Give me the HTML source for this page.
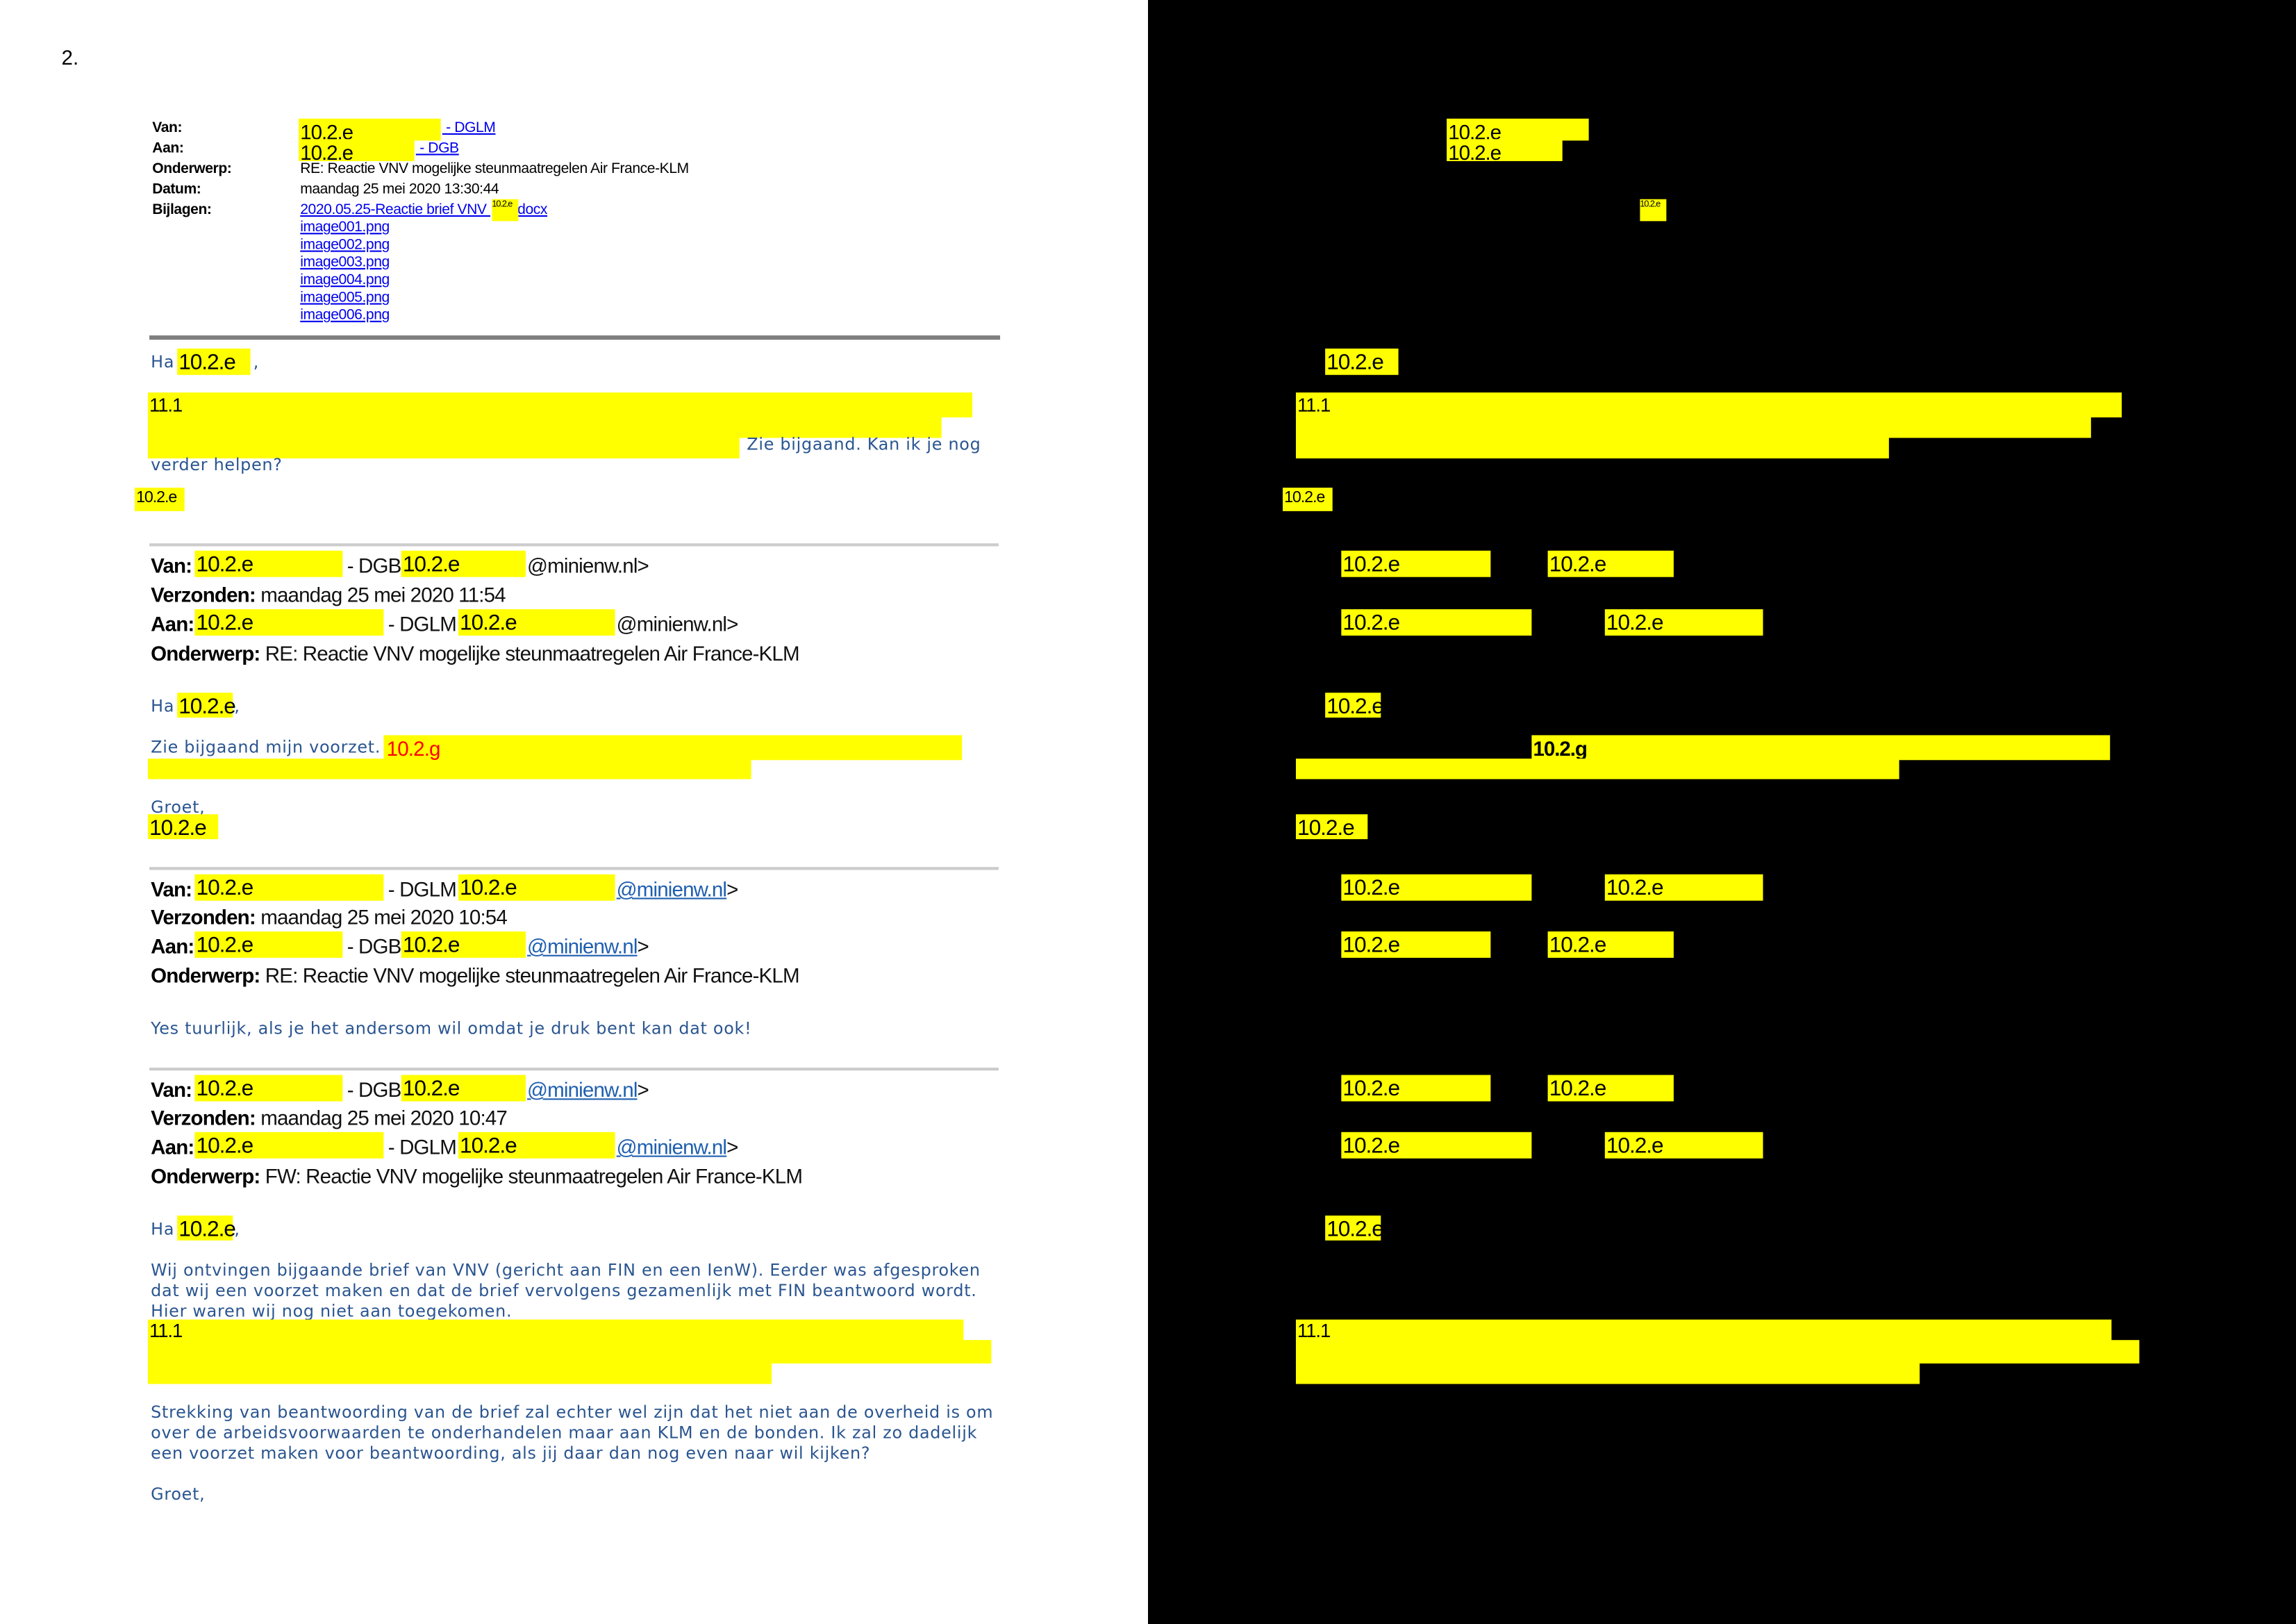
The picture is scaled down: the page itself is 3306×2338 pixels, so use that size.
<!DOCTYPE html>
<html><head><meta charset="utf-8"><style>
html,body{margin:0;padding:0;background:#fff;width:3306px;height:2337px;overflow:hidden}
#p{position:absolute;left:0;top:0;width:1568px;height:1109px;transform:scale(2.10842);transform-origin:0 0}
.a{position:absolute;white-space:nowrap;line-height:1}
.y{position:absolute;background:#ffff00}
.y span{position:absolute;left:1px;top:1px;font:15px "Liberation Sans",sans-serif;color:#000;letter-spacing:-0.5px}
.h{font:10px "Liberation Sans",sans-serif;color:#000;letter-spacing:-0.2px}
.hb{font-weight:bold}
.lk{color:#0000ee;text-decoration:underline}
.c{font:14px "Liberation Sans",sans-serif;color:#111;letter-spacing:-0.4px}
.c b{color:#000}
.v{font:11.3px "DejaVu Sans",sans-serif;color:#2a5590;letter-spacing:0.35px}
.ln{position:absolute;background:#ccc;height:1.5px}
.ul{color:#1f5fb0;text-decoration:underline}
</style></head><body><div id="p">
<div style="position:absolute;left:784px;top:0;width:784px;height:1109px;background:#000"></div>
<div class="a" style="left:42px;top:31px;font:14px 'Liberation Sans',sans-serif">2.</div>

<div class="a h hb" style="left:104px;top:82px">Van:</div>
<div class="a h hb" style="left:104px;top:96px">Aan:</div>
<div class="a h hb" style="left:104px;top:110px">Onderwerp:</div>
<div class="a h hb" style="left:104px;top:124px">Datum:</div>
<div class="a h hb" style="left:104px;top:138px">Bijlagen:</div>
<div class="y" style="left:204px;top:81px;width:97px;height:15px"><span style="font-size:14px">10.2.e</span></div>
<div class="y" style="left:204px;top:95px;width:79px;height:15px"><span style="font-size:14px">10.2.e</span></div>
<div class="a h lk" style="left:302px;top:82px">&nbsp;- DGLM</div>
<div class="a h lk" style="left:284px;top:96px">&nbsp;- DGB</div>
<div class="a h" style="left:205px;top:110px">RE: Reactie VNV mogelijke steunmaatregelen Air France-KLM</div>
<div class="a h" style="left:205px;top:124px">maandag 25 mei 2020 13:30:44</div>
<div class="a h lk" style="left:205px;top:138px">2020.05.25-Reactie brief VNV <span style="display:inline-block;width:16px"></span>.docx</div>
<div class="y" style="left:336px;top:136px;width:18px;height:15px"><span style="font-size:6px;left:0">10.2.e</span></div>
<div class="a h lk" style="left:205px;top:150px">image001.png</div>
<div class="a h lk" style="left:205px;top:162px">image002.png</div>
<div class="a h lk" style="left:205px;top:174px">image003.png</div>
<div class="a h lk" style="left:205px;top:186px">image004.png</div>
<div class="a h lk" style="left:205px;top:198px">image005.png</div>
<div class="a h lk" style="left:205px;top:210px">image006.png</div>
<div style="position:absolute;left:102px;top:229px;width:581px;height:2.5px;background:#808080"></div>

<div class="a v" style="left:103px;top:241px">Ha</div>
<div class="y" style="left:121px;top:238px;width:50px;height:18px"><span>10.2.e</span></div>
<div class="a v" style="left:173px;top:241px">,</div>
<div class="y" style="left:101px;top:268px;width:563px;height:17px"><span style="font-size:13px">11.1</span></div>
<div class="y" style="left:101px;top:284px;width:542px;height:15px"></div>
<div class="y" style="left:101px;top:298px;width:404px;height:15px"></div>
<div class="a v" style="left:510px;top:297px">Zie bijgaand. Kan ik je nog</div>
<div class="a v" style="left:103px;top:311px">verder helpen?</div>
<div class="y" style="left:92px;top:333px;width:34px;height:16px"><span style="font-size:11px">10.2.e</span></div>

<div class="ln" style="left:102px;top:371px;width:580px"></div>
<div class="a c" style="left:103px;top:378px"><b>Van:</b></div>
<div class="y" style="left:133px;top:376px;width:101px;height:18px"><span>10.2.e</span></div>
<div class="a c" style="left:237px;top:378px">- DGB</div>
<div class="y" style="left:274px;top:376px;width:85px;height:18px"><span>10.2.e</span></div>
<div class="a c" style="left:360px;top:378px">@minienw.nl&gt;</div>
<div class="a c" style="left:103px;top:398px"><b>Verzonden:</b> maandag 25 mei 2020 11:54</div>
<div class="a c" style="left:103px;top:418px"><b>Aan:</b></div>
<div class="y" style="left:133px;top:416px;width:129px;height:18px"><span>10.2.e</span></div>
<div class="a c" style="left:265px;top:418px">- DGLM</div>
<div class="y" style="left:313px;top:416px;width:107px;height:18px"><span>10.2.e</span></div>
<div class="a c" style="left:421px;top:418px">@minienw.nl&gt;</div>
<div class="a c" style="left:103px;top:438px"><b>Onderwerp:</b> RE: Reactie VNV mogelijke steunmaatregelen Air France-KLM</div>

<div class="a v" style="left:103px;top:476px">Ha</div>
<div class="y" style="left:121px;top:473px;width:38px;height:17px"><span>10.2.e</span></div>
<div class="a v" style="left:160px;top:476px">,</div>
<div class="y" style="left:262px;top:502px;width:395px;height:17px"></div>
<div class="y" style="left:101px;top:518px;width:412px;height:14px"></div>
<div class="a v" style="left:103px;top:504px">Zie bijgaand mijn voorzet.</div>
<div class="a" style="left:264px;top:503px;font:14px 'Liberation Sans',sans-serif;color:#f00;letter-spacing:-0.4px">10.2.g</div>
<div class="a v" style="left:103px;top:545px">Groet,</div>
<div class="y" style="left:101px;top:556px;width:48px;height:17px"><span>10.2.e</span></div>

<div class="ln" style="left:102px;top:592px;width:580px"></div>
<div class="a c" style="left:103px;top:599px"><b>Van:</b></div>
<div class="y" style="left:133px;top:597px;width:129px;height:18px"><span>10.2.e</span></div>
<div class="a c" style="left:265px;top:599px">- DGLM</div>
<div class="y" style="left:313px;top:597px;width:107px;height:18px"><span>10.2.e</span></div>
<div class="a c" style="left:421px;top:599px"><span class="ul">@minienw.nl</span>&gt;</div>
<div class="a c" style="left:103px;top:618px"><b>Verzonden:</b> maandag 25 mei 2020 10:54</div>
<div class="a c" style="left:103px;top:638px"><b>Aan:</b></div>
<div class="y" style="left:133px;top:636px;width:101px;height:18px"><span>10.2.e</span></div>
<div class="a c" style="left:237px;top:638px">- DGB</div>
<div class="y" style="left:274px;top:636px;width:85px;height:18px"><span>10.2.e</span></div>
<div class="a c" style="left:360px;top:638px"><span class="ul">@minienw.nl</span>&gt;</div>
<div class="a c" style="left:103px;top:658px"><b>Onderwerp:</b> RE: Reactie VNV mogelijke steunmaatregelen Air France-KLM</div>
<div class="a v" style="left:103px;top:696px">Yes tuurlijk, als je het andersom wil omdat je druk bent kan dat ook!</div>

<div class="ln" style="left:102px;top:729px;width:580px"></div>
<div class="a c" style="left:103px;top:736px"><b>Van:</b></div>
<div class="y" style="left:133px;top:734px;width:101px;height:18px"><span>10.2.e</span></div>
<div class="a c" style="left:237px;top:736px">- DGB</div>
<div class="y" style="left:274px;top:734px;width:85px;height:18px"><span>10.2.e</span></div>
<div class="a c" style="left:360px;top:736px"><span class="ul">@minienw.nl</span>&gt;</div>
<div class="a c" style="left:103px;top:755px"><b>Verzonden:</b> maandag 25 mei 2020 10:47</div>
<div class="a c" style="left:103px;top:775px"><b>Aan:</b></div>
<div class="y" style="left:133px;top:773px;width:129px;height:18px"><span>10.2.e</span></div>
<div class="a c" style="left:265px;top:775px">- DGLM</div>
<div class="y" style="left:313px;top:773px;width:107px;height:18px"><span>10.2.e</span></div>
<div class="a c" style="left:421px;top:775px"><span class="ul">@minienw.nl</span>&gt;</div>
<div class="a c" style="left:103px;top:795px"><b>Onderwerp:</b> FW: Reactie VNV mogelijke steunmaatregelen Air France-KLM</div>

<div class="a v" style="left:103px;top:833px">Ha</div>
<div class="y" style="left:121px;top:830px;width:38px;height:17px"><span>10.2.e</span></div>
<div class="a v" style="left:160px;top:833px">,</div>
<div class="a v" style="left:103px;top:861px">Wij ontvingen bijgaande brief van VNV (gericht aan FIN en een IenW). Eerder was afgesproken</div>
<div class="a v" style="left:103px;top:875px">dat wij een voorzet maken en dat de brief vervolgens gezamenlijk met FIN beantwoord wordt.</div>
<div class="a v" style="left:103px;top:889px">Hier waren wij nog niet aan toegekomen.</div>
<div class="y" style="left:101px;top:901px;width:557px;height:15px"><span style="font-size:13px;top:0">11.1</span></div>
<div class="y" style="left:101px;top:915px;width:576px;height:16px"></div>
<div class="y" style="left:101px;top:930px;width:426px;height:15px"></div>
<div class="a v" style="left:103px;top:958px">Strekking van beantwoording van de brief zal echter wel zijn dat het niet aan de overheid is om</div>
<div class="a v" style="left:103px;top:972px">over de arbeidsvoorwaarden te onderhandelen maar aan KLM en de bonden. Ik zal zo dadelijk</div>
<div class="a v" style="left:103px;top:986px">een voorzet maken voor beantwoording, als jij daar dan nog even naar wil kijken?</div>
<div class="a v" style="left:103px;top:1014px">Groet,</div>

<div class="y" style="left:988px;top:81px;width:97px;height:15px"><span style="font-size:14px">10.2.e</span></div>
<div class="y" style="left:988px;top:95px;width:79px;height:15px"><span style="font-size:14px">10.2.e</span></div>
<div class="y" style="left:1120px;top:136px;width:18px;height:15px"><span style="font-size:6px;left:0">10.2.e</span></div>
<div class="y" style="left:905px;top:238px;width:50px;height:18px"><span>10.2.e</span></div>
<div class="y" style="left:885px;top:268px;width:564px;height:17px"><span style="font-size:13px">11.1</span></div>
<div class="y" style="left:885px;top:284px;width:543px;height:15px"></div>
<div class="y" style="left:885px;top:298px;width:405px;height:15px"></div>
<div class="y" style="left:876px;top:333px;width:34px;height:16px"><span style="font-size:11px">10.2.e</span></div>
<div class="y" style="left:916px;top:376px;width:102px;height:18px"><span>10.2.e</span></div>
<div class="y" style="left:1057px;top:376px;width:86px;height:18px"><span>10.2.e</span></div>
<div class="y" style="left:916px;top:416px;width:130px;height:18px"><span>10.2.e</span></div>
<div class="y" style="left:1096px;top:416px;width:108px;height:18px"><span>10.2.e</span></div>
<div class="y" style="left:905px;top:473px;width:38px;height:17px"><span>10.2.e</span></div>
<div class="y" style="left:1046px;top:502px;width:395px;height:17px"><span style="font-weight:bold;font-size:14px">10.2.g</span></div>
<div class="y" style="left:885px;top:518px;width:412px;height:14px"></div>
<div class="y" style="left:885px;top:556px;width:49px;height:17px"><span>10.2.e</span></div>
<div class="y" style="left:916px;top:597px;width:130px;height:18px"><span>10.2.e</span></div>
<div class="y" style="left:1096px;top:597px;width:108px;height:18px"><span>10.2.e</span></div>
<div class="y" style="left:916px;top:636px;width:102px;height:18px"><span>10.2.e</span></div>
<div class="y" style="left:1057px;top:636px;width:86px;height:18px"><span>10.2.e</span></div>
<div class="y" style="left:916px;top:734px;width:102px;height:18px"><span>10.2.e</span></div>
<div class="y" style="left:1057px;top:734px;width:86px;height:18px"><span>10.2.e</span></div>
<div class="y" style="left:916px;top:773px;width:130px;height:18px"><span>10.2.e</span></div>
<div class="y" style="left:1096px;top:773px;width:108px;height:18px"><span>10.2.e</span></div>
<div class="y" style="left:905px;top:830px;width:38px;height:17px"><span>10.2.e</span></div>
<div class="y" style="left:885px;top:901px;width:557px;height:15px"><span style="font-size:13px;top:0">11.1</span></div>
<div class="y" style="left:885px;top:915px;width:576px;height:16px"></div>
<div class="y" style="left:885px;top:930px;width:426px;height:15px"></div>
</div></body></html>
